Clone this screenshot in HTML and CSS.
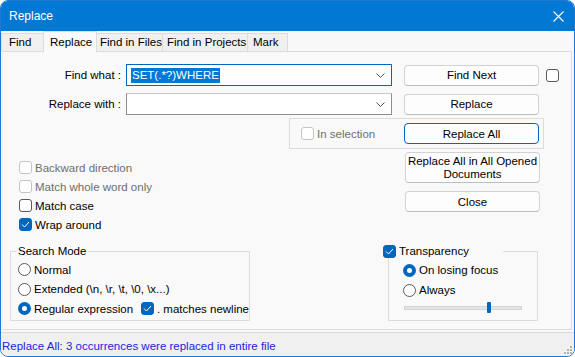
FILE: index.html
```html
<!DOCTYPE html>
<html lang="en">
  <head>
    <meta charset="UTF-8" />
    <title>Replace</title>
    <link rel="stylesheet" href="styles.css">
  </head>
  <body>
    <div class="window">
      <div class="titlebar">
        <span class="title">Replace</span>
        <svg class="closeX" width="11" height="11" viewBox="0 0 11 11">
          <path d="M0.5 0.5 L10.5 10.5 M10.5 0.5 L0.5 10.5" stroke="#fff" stroke-width="1.1" />
        </svg>
      </div>

      <div class="tabs">
        <div class="tab tabFind">Find</div>
        <div class="tab active tabReplace">Replace</div>
        <div class="tab tabFiles">Find in Files</div>
        <div class="tab tabProjects">Find in Projects</div>
        <div class="tab tabMark">Mark</div>
      </div>

      <div class="panel">
        <div class="row">
          <span class="lbl">Find what :</span>
          <div class="combo focused">
            <span class="picked">SET(.*?)WHERE</span>
            <svg class="chev" width="9" height="5" viewBox="0 0 9 5"><path d="M0.5 0.5 L4.5 4.5 L8.5 0.5" fill="none" stroke="#555" /></svg>
          </div>
          <button class="btn">Find Next</button>
          <span class="box boxSide"></span>
        </div>

        <div class="row rowReplace">
          <span class="lbl">Replace with :</span>
          <div class="combo">
            <svg class="chev" width="9" height="5" viewBox="0 0 9 5"><path d="M0.5 0.5 L4.5 4.5 L8.5 0.5" fill="none" stroke="#555" /></svg>
          </div>
          <button class="btn">Replace</button>
        </div>

        <div class="selbox">
          <label class="check off"><span class="box"></span>In selection</label>
          <button class="btn default">Replace All</button>
        </div>

        <div class="middle">
          <div class="options">
            <label class="check off"><span class="box"></span>Backward direction</label>
            <label class="check off"><span class="box"></span>Match whole word only</label>
            <label class="check"><span class="box"></span>Match case</label>
            <label class="check"><span class="box on"><svg width="9" height="7" viewBox="0 0 9 7"><path d="M1 3.5 L3.5 6 L8 1" fill="none" stroke="#fff" stroke-width="1" /></svg></span>Wrap around</label>
          </div>
          <div class="actions">
            <button class="btn tall">Replace All in All Opened<br>Documents</button>
            <button class="btn">Close</button>
          </div>
        </div>

        <div class="bottom">
          <fieldset class="group mode">
            <legend>Search Mode</legend>
            <label class="radio"><span class="dot"></span>Normal</label>
            <label class="radio"><span class="dot"></span>Extended (\n, \r, \t, \0, \x...)</label>
            <div class="radioLine">
              <label class="radio regex"><span class="dot on"></span>Regular expression</label>
              <label class="check"><span class="box on"><svg width="9" height="7" viewBox="0 0 9 7"><path d="M1 3.5 L3.5 6 L8 1" fill="none" stroke="#fff" stroke-width="1" /></svg></span>. matches newline</label>
            </div>
          </fieldset>

          <fieldset class="group transp">
            <legend><label class="check"><span class="box on"><svg width="9" height="7" viewBox="0 0 9 7"><path d="M1 3.5 L3.5 6 L8 1" fill="none" stroke="#fff" stroke-width="1" /></svg></span>Transparency</label></legend>
            <label class="radio"><span class="dot on"></span>On losing focus</label>
            <label class="radio"><span class="dot"></span>Always</label>
            <div class="slider"><span class="thumb"></span></div>
          </fieldset>
        </div>
      </div>

      <div class="status">
        Replace All: 3 occurrences were replaced in entire file
        <svg class="grip" width="9" height="9" viewBox="0 0 9 9" fill="#b4b4b4">
          <rect x="6" y="0" width="2" height="2" />
          <rect x="3" y="3" width="2" height="2" /><rect x="6" y="3" width="2" height="2" />
          <rect x="0" y="6" width="2" height="2" /><rect x="3" y="6" width="2" height="2" /><rect x="6" y="6" width="2" height="2" />
        </svg>
      </div>
    </div>
  </body>
</html>
```

FILE: styles.css
```css
body {
  margin: 0;
  background: #fff;
  font-family: 'Liberation Sans', Arial, sans-serif;
  font-size: 11.5px;
  color: #000;
}
.window {
  width: 575px;
  height: 357px;
  box-sizing: border-box;
  border: 1px solid #1f78d1;
  border-radius: 8px;
  overflow: hidden;
  background: #f8f8f8;
  display: flex;
  flex-direction: column;
}
.titlebar {
  height: 30px;
  flex: none;
  background: #0078d4;
  display: flex;
  align-items: center;
  padding-left: 8px;
}
.title {
  color: #fff;
  font-size: 12px;
}
.closeX {
  margin-left: auto;
  margin-right: 10px;
}

/* tabs */
.tabs {
  height: 20px;
  flex: none;
  display: flex;
  align-items: flex-end;
}
.tab {
  box-sizing: border-box;
  height: 18px;
  line-height: 16px;
  padding-left: 5px;
  border: 1px solid #dcdcdc;
  border-bottom: none;
  background: #f0f0f0;
  margin-right: -1px;
  white-space: nowrap;
  overflow: hidden;
}
.tab.active {
  height: 21px;
  line-height: 20px;
  background: #f9f9f9;
  margin-bottom: -1px;
  position: relative;
  z-index: 1;
}
.tabFind { width: 43px; padding-left: 7px; }
.tabReplace { width: 54px; padding-left: 6px; }
.tabFiles { width: 67px; padding-left: 3px; }
.tabProjects { width: 86px; padding-left: 4px; }
.tabMark { width: 41px; }

/* panel */
.panel {
  flex: none;
  height: 279px;
  box-sizing: border-box;
  margin: 0 2px 0 1px;
  border: 1px solid #dcdcdc;
  border-left-color: #f0f0f0;
  background: #f9f9f9;
}
.row {
  display: flex;
  align-items: center;
  height: 22px;
  margin-top: 12px;
}
.rowReplace {
  margin-top: 7px;
}
.lbl {
  width: 118px;
  text-align: right;
  white-space: nowrap;
}
.combo {
  box-sizing: border-box;
  width: 266px;
  height: 22px;
  margin-left: 5px;
  background: #fff;
  border: 1px solid #8e8e8e;
  border-top-color: #c8c8c8;
  display: flex;
  align-items: center;
  padding-left: 4px;
}
.combo.focused {
  border-color: #0067c0;
}
.picked {
  background: #0078d7;
  color: #fff;
  line-height: 15px;
  padding: 0 1px;
}
.chev {
  margin-left: auto;
  margin-right: 6px;
}
.btn {
  box-sizing: border-box;
  width: 135px;
  height: 21px;
  margin: 0 0 0 12px;
  padding: 0;
  font: inherit;
  color: #000;
  background: #fdfdfd;
  border: 1px solid #d2d2d2;
  border-bottom-color: #bdbdbd;
  border-radius: 4px;
  white-space: nowrap;
}
.btn.default {
  border-color: #0067c0;
}
.btn.tall {
  height: 31px;
  line-height: 13px;
}

/* check boxes and radios */
.check,
.radio {
  display: flex;
  align-items: center;
  height: 19px;
  white-space: nowrap;
}
.box {
  box-sizing: border-box;
  width: 13px;
  height: 13px;
  border: 1px solid #5a5a5a;
  border-radius: 3px;
  background: #fff;
  margin-right: 3px;
  flex: none;
  display: flex;
  align-items: center;
  justify-content: center;
}
.box.on {
  background: #0067c0;
  border-color: #0067c0;
}
.check.off {
  color: #6e6e6e;
}
.check.off .box {
  border-color: #c4c4c4;
}
.boxSide {
  margin-left: 7px;
  margin-right: 0;
}
.dot {
  box-sizing: border-box;
  width: 13px;
  height: 13px;
  border: 1px solid #5a5a5a;
  border-radius: 50%;
  background: #fff;
  margin-right: 3px;
  flex: none;
}
.dot.on {
  border: 4px solid #0067c0;
}

/* in selection group */
.selbox {
  box-sizing: border-box;
  width: 255px;
  height: 31px;
  margin: 3px 0 0 286px;
  border: 1px solid #dcdcdc;
  display: flex;
  align-items: center;
  padding: 0 4px 0 11px;
}
.selbox .btn {
  margin-left: auto;
}

.middle {
  display: flex;
  height: 95px;
}
.options {
  margin: 9px 0 0 16px;
}
.actions {
  margin: 3px 31px 0 auto;
  display: flex;
  flex-direction: column;
}
.actions .btn {
  margin-left: 0;
}
.actions .btn + .btn {
  margin-top: 8px;
}

/* group boxes */
.bottom {
  display: flex;
  align-items: flex-start;
}
.group {
  box-sizing: border-box;
  min-width: 0;
  margin: 0;
  padding: 0;
  border: 1px solid #dcdcdc;
  height: 77px;
}
.group legend {
  padding: 0 2px;
  line-height: 14px;
}
.mode {
  width: 240px;
  margin-left: 7px;
  padding-left: 7px;
  padding-top: 2px;
}
.mode legend {
  margin-left: -2px;
}
.mode .radio {
  height: 19.5px;
}
.radioLine {
  display: flex;
}
.regex {
  width: 123px;
}
.transp {
  width: 150px;
  margin-left: 138px;
  padding-left: 14px;
  padding-top: 2px;
}
.transp legend {
  margin-left: -20px;
  width: 120px;
  padding: 0;
}
.transp legend .check {
  height: 14px;
}
.transp .radio {
  height: 20px;
}
.slider {
  position: relative;
  width: 118px;
  height: 4px;
  margin: 6px 0 0 1px;
  box-sizing: border-box;
  background: #e4e4e4;
  border: 1px solid #d4d4d4;
}
.thumb {
  position: absolute;
  left: 82px;
  top: -5px;
  width: 4px;
  height: 11px;
  background: #0067c0;
  border-radius: 1px;
}

/* status bar */
.status {
  position: relative;
  flex: 1;
  margin-top: 2px;
  border-top: 1px solid #dadada;
  background: #f0f0f0;
  color: #2424d8;
  padding: 7px 0 0 1px;
  white-space: nowrap;
}
.grip {
  position: absolute;
  right: 1px;
  bottom: 1px;
}
```
